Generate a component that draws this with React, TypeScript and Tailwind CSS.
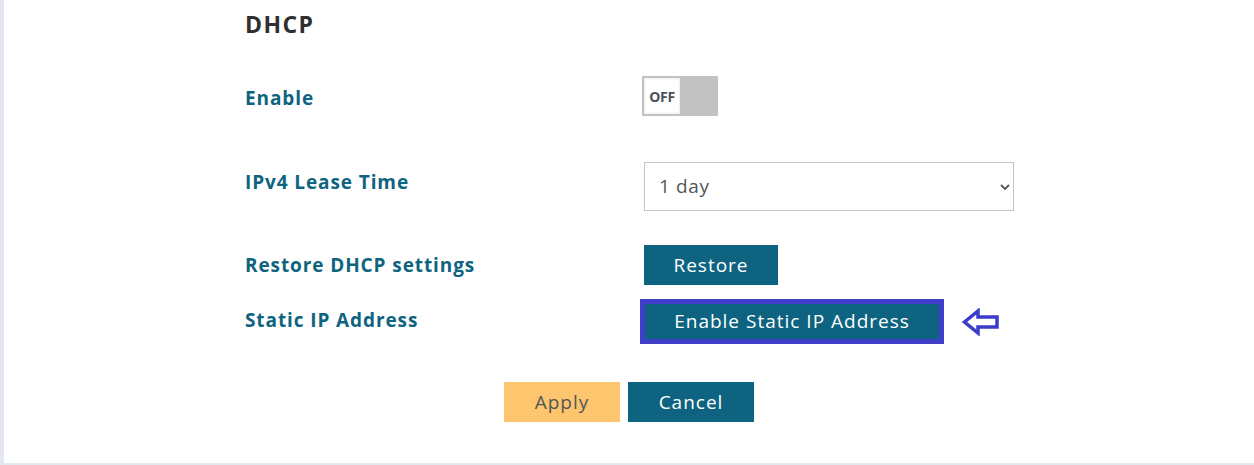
import React from "react";

const labelCls = "w-[399px] shrink-0 text-[19px] font-bold tracking-[0.9px] text-[#0e6480] leading-[24px]";

const Toggle = () => (
  <div className="ml-[-2px] flex h-[40px] w-[76px] bg-[#c2c2c2] p-[2px]">
    <div className="flex h-[36px] w-[36px] items-center justify-center bg-white shadow-[inset_0_0_3px_rgba(0,0,0,0.15)]">
      <span className="text-[14px] font-bold tracking-[-0.3px] text-[#4a505a]">OFF</span>
    </div>
  </div>
);

const BackArrow = () => (
  <svg width="38" height="28" viewBox="0 0 38 28" className="ml-[18px]">
    <path
      d="M2.5 14 L16 3 L16 9 L35 9 L35 19 L16 19 L16 25 Z"
      fill="white"
      stroke="#3b3bcc"
      strokeWidth="3.5"
      strokeLinejoin="miter"
    />
  </svg>
);

export default function App() {
  return (
    <div
      className="flex h-[465px] w-full flex-col bg-white"
      style={{ fontFamily: "'Open Sans', 'Noto Sans', sans-serif" }}
    >
      <div className="flex flex-1 border-l-4 border-[#e3e8ee]">
        <div className="flex flex-1 flex-col pl-[241px] pt-[10px]">
          <h2 className="h-[28px] text-[23px] font-bold leading-[28px] tracking-[1.4px] text-[#2f2f2f]">DHCP</h2>

          <div className="mt-[38px] flex h-[40px] items-center">
            <div className={labelCls + " mt-[3px]"}>Enable</div>
            <Toggle />
          </div>

          <div className="mt-[46px] flex h-[49px] items-center">
            <div className={labelCls + " mb-[9px]"}>IPv4 Lease Time</div>
            <div className="relative h-[49px] w-[370px]">
              <select
                defaultValue="1day"
                className="h-full w-full appearance-none border border-[#c4c4c4] bg-white pl-[14px] text-[19px] tracking-[0.6px] text-[#555] outline-none"
                style={{ fontFamily: "'Open Sans', sans-serif" }}
              >
                <option value="1day">1 day</option>
                <option value="2day">2 days</option>
                <option value="1week">1 week</option>
              </select>
              <svg
                width="10"
                height="6"
                viewBox="0 0 10 6"
                className="pointer-events-none absolute right-[4px] top-[22px]"
              >
                <path d="M1 1 L5 5 L9 1" fill="none" stroke="#555" strokeWidth="1.8" />
              </svg>
            </div>
          </div>

          <div className="mt-[34px] flex h-[40px] items-center">
            <div className={labelCls}>Restore DHCP settings</div>
            <button className="h-[40px] w-[134px] bg-[#0e6480] text-[19px] tracking-[1px] text-white">Restore</button>
          </div>

          <div className="mt-[14px] flex h-[45px] items-center">
            <div className={labelCls + " mb-[4px]"}>Static IP Address</div>
            <button className="ml-[-4px] h-[45px] w-[304px] border-[5px] border-[#3f3fc9] bg-[#0e6480] text-[19px] tracking-[1px] text-white">
              Enable Static IP Address
            </button>
            <BackArrow />
          </div>

          <div className="ml-[-241px] mt-[38px] flex h-[40px] justify-center gap-[8px]">
            <button className="h-[40px] w-[116px] bg-[#fcc56e] text-[19px] tracking-[1px] text-[#555]">Apply</button>
            <button className="h-[40px] w-[126px] bg-[#0e6480] text-[19px] tracking-[1px] text-white">Cancel</button>
          </div>
        </div>
      </div>
      <div className="h-[2px] w-full bg-[#e3e8ee]" />
    </div>
  );
}
